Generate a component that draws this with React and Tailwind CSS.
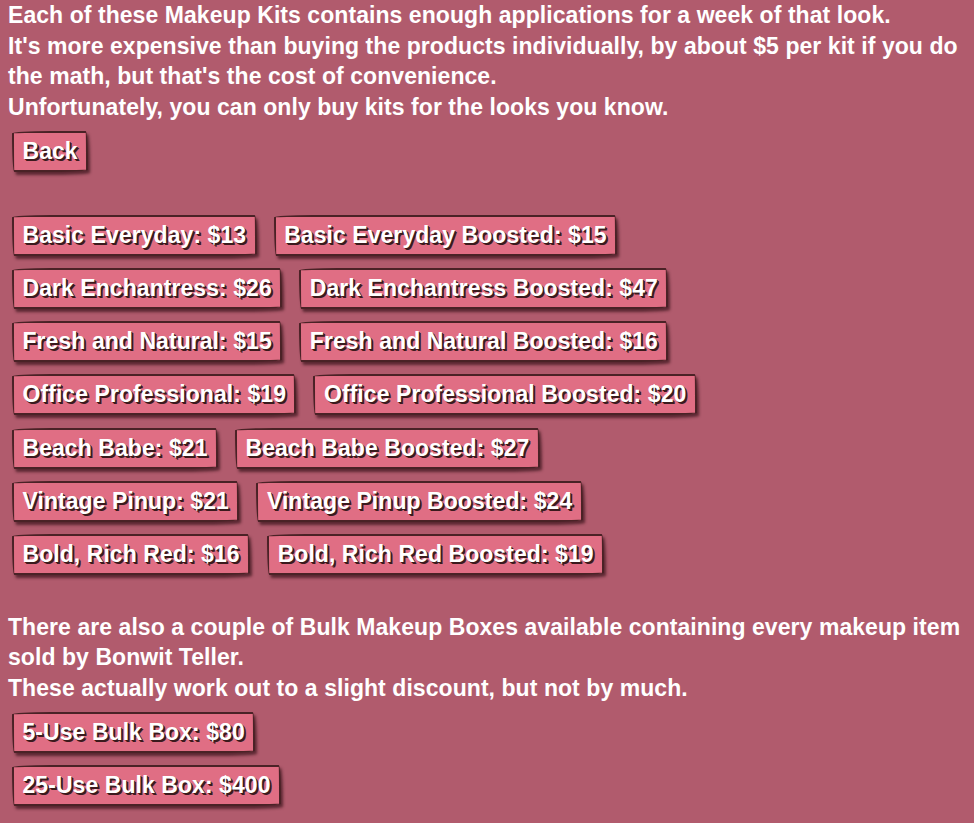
import React from 'react'

const kits = [
  ['Basic Everyday: $13', 'Basic Everyday Boosted: $15'],
  ['Dark Enchantress: $26', 'Dark Enchantress Boosted: $47'],
  ['Fresh and Natural: $15', 'Fresh and Natural Boosted: $16'],
  ['Office Professional: $19', 'Office Professional Boosted: $20'],
  ['Beach Babe: $21', 'Beach Babe Boosted: $27'],
  ['Vintage Pinup: $21', 'Vintage Pinup Boosted: $24'],
  ['Bold, Rich Red: $16', 'Bold, Rich Red Boosted: $19'],
]

/* ─────────────── Wonky link button ─────────────── */

function KitButton({ children }) {
  return (
    <button
      className="shrink-0 whitespace-nowrap border-2 border-[#4a2226] bg-[#e06e84] px-[8.5px] py-[3px]
                 font-bold leading-[31px] text-white
                 rounded-[255px_15px_225px_15px/15px_225px_15px_255px]
                 shadow-[2px_3px_3px_rgba(45,12,18,0.65)]
                 [text-shadow:1px_1px_0_#3b1a1d,2px_2px_0_#3b1a1d]"
    >
      {children}
    </button>
  )
}

function Lines({ lines }) {
  return (
    <div>
      {lines.map((l) => (
        <div key={l} className="whitespace-nowrap">
          {l}
        </div>
      ))}
    </div>
  )
}

export default function App() {
  return (
    <div className="min-h-screen w-full bg-[#b15b6d] px-2 text-[23px] font-bold leading-[30.6px] tracking-[0.06px] text-white [font-family:'Liberation_Sans',Arial,sans-serif]">
      <Lines
        lines={[
          'Each of these Makeup Kits contains enough applications for a week of that look.',
          "It's more expensive than buying the products individually, by about $5 per kit if you do",
          "the math, but that's the cost of convenience.",
          'Unfortunately, you can only buy kits for the looks you know.',
        ]}
      />

      <div className="mt-[8.5px] pl-1">
        <KitButton>Back</KitButton>
      </div>

      <div className="mt-[43px] flex flex-col gap-[12.2px] pl-1">
        {kits.map(([a, b]) => (
          <div key={a} className="flex gap-[17px]">
            <KitButton>{a}</KitButton>
            <KitButton>{b}</KitButton>
          </div>
        ))}
      </div>

      <div className="mt-[36.5px]">
        <Lines
          lines={[
            'There are also a couple of Bulk Makeup Boxes available containing every makeup item',
            'sold by Bonwit Teller.',
            'These actually work out to a slight discount, but not by much.',
          ]}
        />
      </div>

      <div className="mt-[8.5px] flex flex-col items-start gap-[12px] pl-1">
        <KitButton>5-Use Bulk Box: $80</KitButton>
        <KitButton>25-Use Bulk Box: $400</KitButton>
      </div>
    </div>
  )
}
